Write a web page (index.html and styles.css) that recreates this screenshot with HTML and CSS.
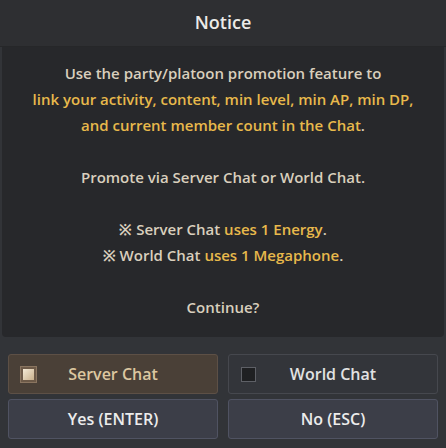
FILE: index.html
```html
<!DOCTYPE html>
<html>
<head>
<meta charset="utf-8">
<link rel="stylesheet" href="styles.css">
</head>
<body>
<div class="dialog">
  <div class="header">Notice</div>
  <div class="panel">
    <p class="line">Use the party/platoon promotion feature to</p>
    <p class="line hl">link your activity, content, min level, min AP, min DP,</p>
    <p class="line hl">and current member count in the Chat<span class="plain">.</span></p>
    <p class="line blank"></p>
    <p class="line">Promote via Server Chat or World Chat.</p>
    <p class="line blank"></p>
    <p class="line">※ Server Chat <span class="y">uses 1 Energy</span>.</p>
    <p class="line">※ World Chat <span class="y">uses 1 Megaphone</span>.</p>
    <p class="line blank"></p>
    <p class="line">Continue?</p>
  </div>
  <div class="footer">
    <div class="row">
      <button class="btn opt active"><span class="check on"></span><span class="label">Server Chat</span></button>
      <button class="btn opt"><span class="check"></span><span class="label">World Chat</span></button>
    </div>
    <div class="row">
      <button class="btn act">Yes (ENTER)</button>
      <button class="btn act">No (ESC)</button>
    </div>
  </div>
</div>
</body>
</html>
```

FILE: styles.css
```css
* { box-sizing: border-box; }
html, body { margin: 0; padding: 0; }
body {
  width: 446px;
  height: 448px;
  background: #323438;
  font-family: "Open Sans", Lato, sans-serif;
  font-weight: 600;
  overflow: hidden;
}
.dialog {
  display: flex;
  flex-direction: column;
  height: 448px;
}
.header {
  height: 47px;
  background: #2e2f32;
  color: #ecebe8;
  font-size: 18px;
  text-align: center;
  line-height: 44px;
  border-bottom: 1px solid #262729;
}
.panel {
  margin: 0 2px;
  height: 290px;
  background: #27282b;
  border-radius: 0 0 4px 4px;
  padding-top: 13px;
  text-align: center;
  font-size: 15px;
  color: #d9cfbd;
}
.line {
  margin: 0;
  height: 26px;
  line-height: 26px;
  white-space: nowrap;
}
.hl { color: #e8b94b; }
.plain { color: #d9cfbd; }
.y { color: #e8b94b; }
.footer {
  flex: 1;
  padding: 17px 8px 0 8px;
  display: flex;
  flex-direction: column;
  gap: 5px;
}
.row {
  display: flex;
  gap: 10px;
}
.btn {
  flex: 1;
  height: 40px;
  border-radius: 3px;
  font-family: inherit;
  font-weight: 600;
  font-size: 16px;
  position: relative;
  display: flex;
  align-items: center;
  justify-content: center;
  padding: 0;
}
.opt {
  background: #33353a;
  border: 1px solid #46484e;
  color: #e2e2e2;
}
.opt.active {
  background: #4a4037;
  border-color: #5d5046;
  color: #dcc7a0;
}
.act {
  background: #3c3e48;
  border: 1px solid #505362;
  color: #ececec;
}
.check {
  position: absolute;
  left: 12px;
  top: 12px;
  width: 15px;
  height: 15px;
  background: #1f2022;
  border: 1px solid #5e6066;
}
.check.on {
  background: linear-gradient(135deg, #f4ead6, #c9b08c);
  border: 2px solid #6d5a48;
  box-shadow: 0 0 0 1px #8a7560;
}
```
